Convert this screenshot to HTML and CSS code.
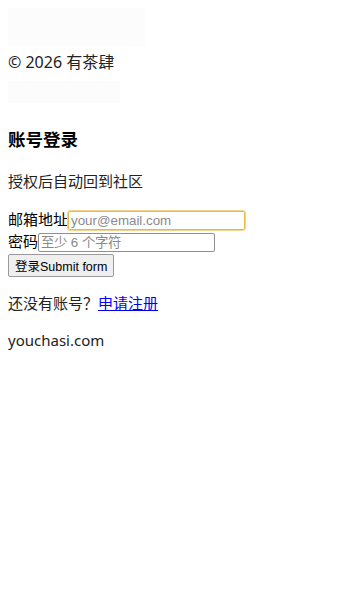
FILE: index.html
```html
<!DOCTYPE html>
<html lang="zh-CN">
<head>
    <meta charset="UTF-8">
    <meta name="viewport" content="width=device-width, initial-scale=1.0">
    <title>账号登录 - 有茶肆</title>
    <link rel="stylesheet" href="styles.css">
</head>
<body>
    <div class="logo-box"></div>
    <div class="copyright">© 2026 有茶肆</div>
    <div class="nav-box"></div>

    <main class="login">
        <h2>账号登录</h2>
        <p class="lead">授权后自动回到社区</p>
        <form class="login-form">
            <label>邮箱地址<input type="email" class="field field-focus" placeholder="your@email.com"></label><br>
            <label>密码<input type="password" class="field" placeholder="至少 6 个字符"></label><br>
            <button type="submit" class="btn">登录Submit form</button>
        </form>
        <p class="signup">还没有账号？<a href="#">申请注册</a></p>
    </main>

    <p class="site">youchasi.com</p>
</body>
</html>
```

FILE: styles.css
```css
body {
    margin: 8px;
    font-family: "Noto Sans", "Noto Sans CJK SC", sans-serif;
    font-size: 15px;
    color: #222;
    background: #fff;
}
.logo-box {
    width: 137px;
    height: 38px;
    background: #fcfcfc;
}
.copyright {
    margin-top: 3px;
    font-size: 16px;
}
.nav-box {
    width: 112px;
    height: 22px;
    margin-top: 8px;
    background: #fcfcfc;
}
.login h2 {
    font-size: 17.5px;
    font-weight: bold;
    margin: 23px 0 19px;
    color: #000;
}
.lead {
    margin: 0 0 17px;
}
.login-form label {
    color: #000;
}
.field {
    font-family: "Liberation Sans", Arial, sans-serif;
    font-size: 13.33px;
    width: 171px;
    padding: 1px 2px;
    border: 1px solid #8f8f8f;
    border-radius: 2px;
    vertical-align: baseline;
}
.field::placeholder {
    color: #8a8a8a;
}
.field-focus {
    border-color: #e8b84a;
    outline: 1px solid #f2d38b;
}
.btn {
    box-sizing: border-box;
    font-family: "Liberation Sans", "Noto Sans CJK SC", sans-serif;
    font-size: 12.5px;
    color: #000;
    height: 23px;
    margin-top: 2px;
    padding: 0 6px;
    background: #efefef;
    border: 1px solid #9a9a9a;
    border-radius: 2px;
}
.signup {
    margin: 15px 0 0;
}
.login a {
    color: #0000ee;
}
.site {
    margin: 17px 0;
}
```
